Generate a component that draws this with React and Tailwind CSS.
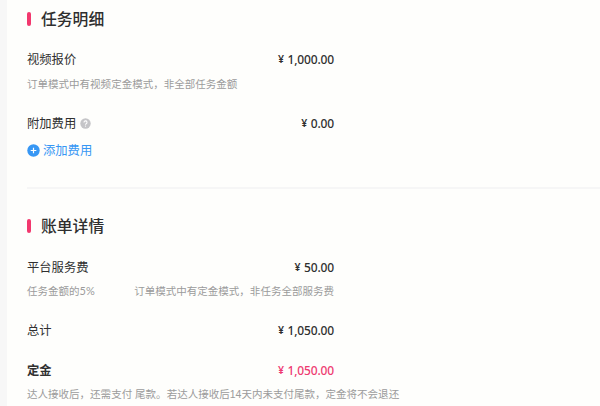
import clsx from "clsx";

const taskRows = [
  {
    label: "视频报价",
    amount: "1,000.00",
    note: "订单模式中有视频定金模式，非全部任务金额",
  },
];

function SectionTitle({ children }) {
  return (
    <h2 className="flex h-6 items-center gap-[10px] font-['Noto_Sans_CJK_SC',sans-serif] text-[15.8px] font-medium text-[#2f2f2f]">
      <span className="h-[14px] w-1 rounded-full bg-[#f2386e]" />
      {children}
    </h2>
  );
}

function Row({ label, amount, bold, highlight, className }) {
  return (
    <div className={clsx("flex h-5 w-[307px] items-center justify-between", className)}>
      <div className={clsx("flex items-center pt-[2px] text-[12.3px] text-[#303030]", bold && "font-bold")}>
        {label}
      </div>
      <Amount value={amount} highlight={highlight} />
    </div>
  );
}

function Amount({ value, highlight }) {
  return (
    <div
      className={clsx(
        "flex items-center gap-[3.5px] pt-px font-['Noto_Sans','Noto_Sans_CJK_SC',sans-serif] font-semibold",
        highlight ? "text-[#ee3b72]" : "text-[#2f2f2f]"
      )}
    >
      <span className="text-[10.5px]">¥</span>
      <span className="text-[12px] font-medium tracking-[-0.15px]">{value}</span>
    </div>
  );
}

function Note({ children }) {
  return (
    <p className="flex h-4 w-[307px] justify-between whitespace-nowrap text-[10.53px] leading-4 text-[#9b9b9b]">
      {children}
    </p>
  );
}

function HelpIcon() {
  return (
    <svg className="mb-px ml-1 size-[11px]" viewBox="0 0 11 11" fill="none">
      <circle cx="5.5" cy="5.5" r="5.2" fill="#c5c5c8" />
      <path d="M4 4.4a1.5 1.5 0 1 1 2.2 1.3c-.5.3-.7.5-.7 1" stroke="#fff" strokeWidth="1.1" />
      <circle cx="5.5" cy="8.1" r=".65" fill="#fff" />
    </svg>
  );
}

function PlusIcon() {
  return (
    <svg className="mb-[2px] size-[13px]" viewBox="0 0 13 13" fill="none">
      <circle cx="6.5" cy="6.5" r="6.2" fill="#3797f4" />
      <path d="M6.5 3.7v5.6M3.7 6.5h5.6" stroke="#fff" strokeWidth="1.2" />
    </svg>
  );
}

export default function App() {
  return (
    <div className="h-[406px] w-[600px] overflow-hidden bg-[#f7f7f7] pl-[6.5px] font-['Liberation_Sans','Noto_Sans_CJK_SC',sans-serif]">
      <main className="h-full bg-[#fefefc] pt-[7px] pl-[20.5px]">
        {/* 任务明细 */}
        <section className="h-[180px]">
          <SectionTitle>任务明细</SectionTitle>
          {taskRows.map((row) => (
            <div key={row.label} className="pt-[18px]">
              <Row label={row.label} amount={row.amount} />
              <div className="pt-[7px]">
                <Note>{row.note}</Note>
              </div>
            </div>
          ))}
          <Row
            className="mt-[21px]"
            label={
              <>
                附加费用
                <HelpIcon />
              </>
            }
            amount="0.00"
          />
          <button className="mt-[7px] flex h-5 items-center gap-[3px] pt-[2px] text-[12.3px] text-[#3797f4]">
            <PlusIcon />
            添加费用
          </button>
        </section>

        <hr className="h-[2px] border-0 bg-[#f6f6f6]" />

        {/* 账单详情 */}
        <section className="pt-[25px]">
          <SectionTitle>账单详情</SectionTitle>
          <Row className="mt-[19px]" label="平台服务费" amount="50.00" />
          <div className="pt-[6px]">
            <Note>
              <span>
                任务金额的<span className="font-['Lato'] text-[11px]">5%</span>
              </span>
              <span>订单模式中有定金模式，非任务全部服务费</span>
            </Note>
          </div>
          <Row className="mt-[21px]" label="总计" amount="1,050.00" />
          <Row className="mt-5" label="定金" amount="1,050.00" bold highlight />
          <div className="pt-[6px]">
            <Note>达人接收后，还需支付 尾款。若达人接收后14天内未支付尾款，定金将不会退还</Note>
          </div>
        </section>
      </main>
    </div>
  );
}
